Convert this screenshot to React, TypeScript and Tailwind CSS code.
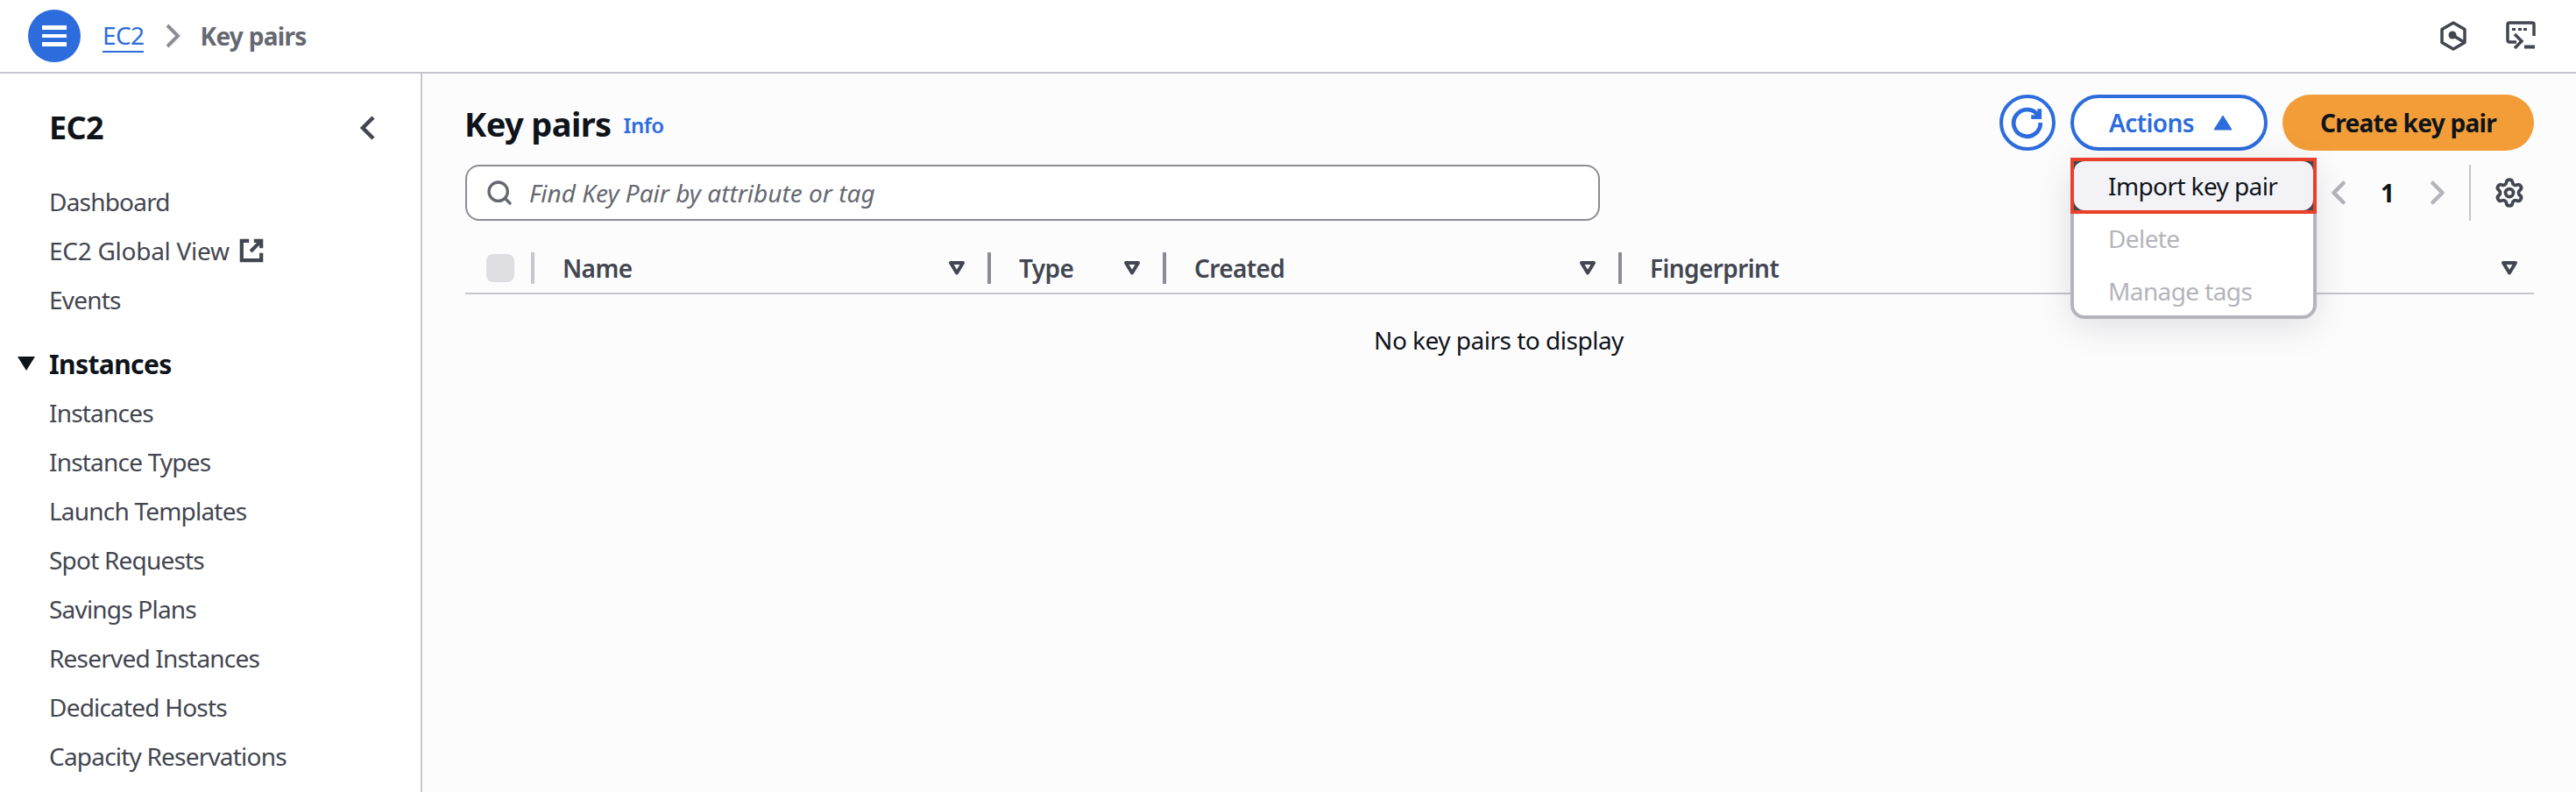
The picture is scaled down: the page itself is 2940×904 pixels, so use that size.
import React from "react";
import { Settings, ChevronLeft, ChevronRight, Search } from "lucide-react";

const font = "[font-family:'Noto_Sans','Open_Sans',sans-serif]";

function FilterIcon() {
  return (
    <svg width="20" height="18" viewBox="0 0 20 18" className="shrink-0" fill="none">
      <path d="M3 3h14L10 14.500z" stroke="#424650" strokeWidth="4" strokeLinejoin="round" />
    </svg>
  );
}

function HeaderCell({ label, className, last }: { label: string; className: string; last?: boolean }) {
  return (
    <div className={`flex h-[36px] items-center ${className}`}>
      <span className="ml-[32px] text-[28px] leading-[36px] font-semibold tracking-[-0.6px] text-[#424650]">{label}</span>
      <div className="ml-auto flex items-center">
        <FilterIcon />
        {last ? <div className="w-[18px]" /> : <div className="ml-[25px] h-[36px] w-[4px] bg-[#8c8c94]" />}
      </div>
    </div>
  );
}

const instanceItems = [
  "Instances",
  "Instance Types",
  "Launch Templates",
  "Spot Requests",
  "Savings Plans",
  "Reserved Instances",
  "Dedicated Hosts",
  "Capacity Reservations",
];

function NavItem({ children, wide }: { children: React.ReactNode; wide?: boolean }) {
  return (
    <div className={`flex h-[56px] items-center text-[28px] text-[#424650] ${wide ? "tracking-[-0.27px]" : "tracking-[-0.8px]"}`}>{children}</div>
  );
}

export default function App() {
  return (
    <div className={`flex h-screen w-full flex-col overflow-hidden bg-white ${font}`}>
      <header className="flex h-[84px] shrink-0 items-center border-b-[2px] border-[#c6c6cd] bg-white pl-[32px] pr-[46px]">
        <button className="flex h-[60px] w-[60px] items-center justify-center rounded-full bg-[#2c6cdc]">
          <svg width="28" height="24" viewBox="0 0 28 24" fill="#fff">
            <rect x="0" y="0" width="28" height="5" />
            <rect x="0" y="10" width="28" height="4" />
            <rect x="0" y="19" width="28" height="5" />
          </svg>
        </button>
        <span className="ml-[25px] border-b-[2px] border-[#2c6cdc] text-[28px] leading-[36px] tracking-[-0.6px] text-[#2c6cdc]">EC2</span>
        <svg width="18" height="28" viewBox="0 0 18 28" fill="none" className="ml-[24px]">
          <path d="M3 2l12 12L3 26" stroke="#8c8c94" strokeWidth="4" />
        </svg>
        <span className="ml-[22px] text-[28px] font-bold tracking-[-0.7px] text-[#656871]">Key pairs</span>
        <div className="ml-auto flex items-center gap-[44px]">
          <svg width="32" height="34" viewBox="0 0 32 34" fill="none">
            <path d="M16 2l13 7.500v15L16 32 3 24.500V9.500z" stroke="#424650" strokeWidth="3.500" strokeLinejoin="round" />
            <circle cx="15" cy="16" r="4.500" fill="#424650" />
            <path d="M15 16l13 8" stroke="#424650" strokeWidth="3.500" />
          </svg>
          <svg width="34" height="34" viewBox="0 0 34 34" fill="none">
            <path d="M12 24H4a2 2 0 0 1-2-2V4a2 2 0 0 1 2-2h26a2 2 0 0 1 2 2v13" stroke="#424650" strokeWidth="3.500" />
            <path d="M7 8h4v3H7zM14 8h4v3h-4zM20 8h4v3h-4z" fill="#424650" />
            <path d="M10 15l8 8-8 8" stroke="#424650" strokeWidth="3.500" />
            <path d="M21 29.500h12" stroke="#424650" strokeWidth="4" />
          </svg>
        </div>
      </header>

      <div className="flex min-h-0 flex-1">
        <aside className="w-[482px] shrink-0 border-r-[2px] border-[#c6c6cd] bg-white">
          <div className="flex items-center pl-[56px] pr-[50px] pt-[40px]">
            <span className="text-[36px] leading-[44px] font-bold tracking-[-0.6px] text-[#0f141a]">EC2</span>
            <svg width="20" height="28" viewBox="0 0 20 28" fill="none" className="ml-auto">
              <path d="M16 2L4 14l12 12" stroke="#424650" strokeWidth="4.500" />
            </svg>
          </div>
          <div className="mt-[34px] pl-[56px]">
            <NavItem>Dashboard</NavItem>
            <NavItem wide>
              EC2 Global View
              <svg width="28" height="28" viewBox="0 0 30 30" fill="none" className="ml-[11px]">
                <path d="M12 3H3v24h24v-9" stroke="#424650" strokeWidth="4.500" />
                <path d="M18 3h9v9M27 3L14 16" stroke="#424650" strokeWidth="4.500" />
              </svg>
            </NavItem>
            <NavItem>Events</NavItem>
          </div>
          <div className="mt-[17px] flex h-[56px] items-center pl-[20px]">
            <svg width="20" height="16" viewBox="0 0 20 16" fill="#0f141a">
              <path d="M0 0h20L10 16z" />
            </svg>
            <span className="ml-[16px] text-[30px] font-bold tracking-[-0.6px] text-[#0f141a]">Instances</span>
          </div>
          <div className="pl-[56px]">
            {instanceItems.map((item) => (
              <NavItem key={item}>{item}</NavItem>
            ))}
          </div>
        </aside>

        <main className="min-w-0 flex-1 bg-[#fcfcfd] pl-[49px] pr-[48px] pt-[24px]">
          <div className="flex h-[64px] items-center">
            <h1 className="-ml-[1px] mt-[1px] text-[38px] leading-[44px] font-bold tracking-[-0.6px] text-[#0f141a]">Key pairs</h1>
            <span className="ml-[14px] mt-[6px] text-[24px] font-semibold tracking-[-0.5px] text-[#2c6cdc]">Info</span>
            <div className="ml-auto flex items-center">
              <button className="flex h-[64px] w-[64px] items-center justify-center rounded-full border-[4px] border-[#2c6cdc] bg-white">
                <svg width="38" height="38" viewBox="0 0 36 36" fill="none">
                  <path d="M30 11A14.500 14.500 0 1 0 32 18" stroke="#2c6cdc" strokeWidth="4.500" />
                  <path d="M31 3v9h-9" stroke="#2c6cdc" strokeWidth="4.500" />
                </svg>
              </button>
              <div className="relative ml-[17px]">
                <button className="flex h-[64px] w-[225px] items-center justify-center rounded-full border-[4px] border-[#2c6cdc] bg-white pl-[4px] text-[28px] font-semibold tracking-[-0.6px] text-[#2c6cdc]">
                  Actions
                  <svg width="22" height="18" viewBox="0 0 22 18" fill="#2c6cdc" className="ml-[22px]">
                    <path d="M11 1l10 16H1z" stroke="#2c6cdc" strokeWidth="1" strokeLinejoin="round" />
                  </svg>
                </button>
                <div className="absolute left-0 top-[72px] z-10 w-[281px] rounded-[16px] border-[4px] border-[#b4b4bb] bg-white text-[28px] tracking-[-0.6px] shadow-[0_8px_40px_rgba(0,7,22,0.12)]">
                  <div className="-mx-[4px] -mt-[4px] h-[64px] border-[4px] border-[#e8402a] bg-[#424650]">
                    <div className="flex h-full items-center rounded-[12px] bg-[#f3f3f7] pl-[39px] text-[#0f141a]">
                      Import key pair
                    </div>
                  </div>
                  <div className="flex h-[56px] items-center pl-[39px] text-[#b4b4bb]">Delete</div>
                  <div className="flex h-[60px] items-center pl-[39px] pt-[4px] text-[#b4b4bb]">Manage tags</div>
                </div>
              </div>
              <button className="ml-[17px] h-[64px] w-[287px] rounded-full bg-[#f29d38] text-[28px] font-bold tracking-[-0.7px] text-[#0f141a]">
                Create key pair
              </button>
            </div>
          </div>

          <div className="mt-[16px] flex h-[64px] items-center">
            <div className="flex h-[64px] w-[1295px] items-center rounded-[16px] border-[2px] border-[#8c8c94] bg-white pl-[21px]">
              <Search size={32} strokeWidth={2.500} color="#656871" />
              <span className="ml-[18px] text-[28px] italic tracking-[0px] text-[#656871]">Find Key Pair by attribute or tag</span>
            </div>
            <div className="ml-auto flex items-center">
              <ChevronLeft size={44} strokeWidth={2.500} color="#b4b4bb" />
              <span className="ml-[26px] w-[16px] text-center text-[28px] font-bold text-[#0f141a]">1</span>
              <ChevronRight size={44} strokeWidth={2.500} color="#b4b4bb" className="ml-[27px]" />
              <div className="ml-[14px] h-[64px] w-[2px] bg-[#c6c6cd]" />
              <Settings size={36} strokeWidth={2.500} color="#424650" className="ml-[26px] mr-[10px]" />
            </div>
          </div>

          <div className="mt-[36px] flex items-center border-b-[2px] border-[#c6c6cd] pb-[10px]">
            <div className="flex h-[36px] w-[79px] items-center pl-[24px]">
              <div className="h-[32px] w-[32px] rounded-[8px] bg-[#dedee3]" />
              <div className="ml-[19px] h-[36px] w-[4px] bg-[#c6c6cd]" />
            </div>
            <HeaderCell label="Name" className="w-[521px]" />
            <HeaderCell label="Type" className="w-[200px]" />
            <HeaderCell label="Created" className="w-[520px]" />
            <HeaderCell label="Fingerprint" className="flex-1" last />
          </div>

          <div className="mt-[34px] w-[2359px] text-center text-[28px] leading-[36px] tracking-[-0.5px] text-[#0f141a]">
            No key pairs to display
          </div>
        </main>
      </div>
    </div>
  );
}
